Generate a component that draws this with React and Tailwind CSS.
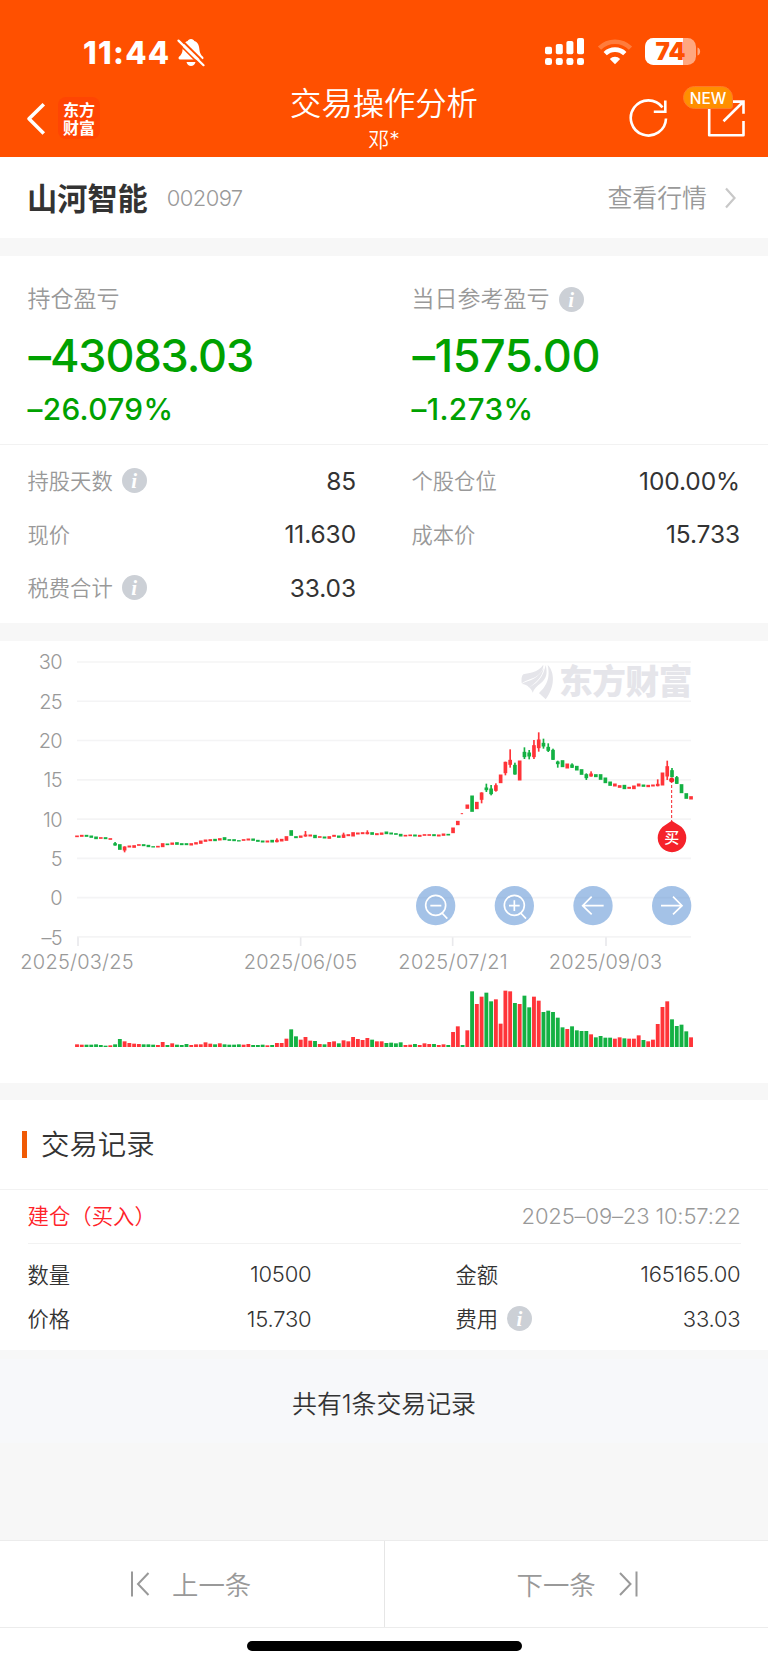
const RED = '#ff3439';
const GREEN = '#14b143';

// Daily candles: direction, body top, body bottom, optional wick top and wick bottom.
const CANDLES = `R586-592 R584-591 G584-591 G586-594 G589-598 R591-597 G591-598 R594-600 G609-617-606 G612-630 R619-632-619-637
R616-623 R615-624 R612-618 G612-619 G614-622 G618-623 R617-623 R609-622 G610-616 R607-615 G606-615 G609-616 G609-616
R609-617 R606-614 R601-612 R598-606 R597-604 G596-604 R594-602 G591-601 G597-603 G597-604 G600-605 R597-603 R595-602
G595-603 G599-606 G601-608 R601-608 G599-608 R599-607-595 R596-605 R588-603 G570-588 G588-595 R586-594 R583-590-573 R583-590
G584-595 R588-594 G589-596 R588-597 R584-591 G586-594 R583-594-578 R582-589 R576-590 R577-584 R576-583 R576-583-571
G576-585 R579-586 R577-585 G574-583 G577-584 G579-585 G581-590 R584-590 R583-589 G583-590 R584-591 R582-588
R582-588 G582-589 R583-590 R580-588 G581-587 R562-580 R542-556 R519-523 R493-507 G466-516 R485-508 R457-480-457-490
G442-451-431-456 G445-463-435-466 R435-453-430-455 R403-430 R365-400-365-406 R359-375-328-383 G374-404-368 R361-422
G335-352-322-357 G337-350-330-358 R315-352-300-357 R298-325-277-335 G308-320-296-326 G320-333-310-336 G329-360-326
G364-373-362-383 G360-382 R370-386 G373-384-370 G377-392 G387-405 G402-415-400-420 R400-410-394 G402-412 G402-420 G412-430
G424-438 R430-440 R435-444 G434-448 R440-447 R436-448 R430-440 G433-441 R434-442 R433-440 R431-439-418 R397-437
R378-410-362-420 G390-412-384 G411-432-408 G432-460 G459-477 R468-479`
  .split(/\s+/)
  .map((s) => [s[0], ...s.slice(1).split('-').map(Number)]);

// Daily volumes: direction and top of the bar.
const VOLUMES = `R1213 R1214 G1214 G1214 G1213 G1215 G1217 R1216 G1213 G1197 R1204 R1209 R1211 R1212 G1213 G1213 G1214 R1215
R1206 G1215 R1210 G1214 G1215 G1212 R1215 R1213 R1213 R1207 R1211 G1213 R1210 G1213 G1214 G1214 G1213 R1214 R1212
G1215 G1215 G1214 R1216 G1215 R1209 R1209 R1196 G1168 G1189 R1199 R1191 R1202 G1203 R1212 G1213 R1206 R1204
G1210 R1201 R1204 R1191 R1197 R1200 R1194 G1199 R1204 R1204 G1209 G1208 G1210 G1207 R1215 R1214 G1212 R1215
R1210 R1212 G1212 R1215 R1213 G1215 R1176 R1159 G1215 R1171 G1054 R1092 R1070 G1058 G1084 R1078 R1151 R1052
R1054 G1089 R1092 G1067 G1102 R1070 R1082 G1116 G1112 G1116 G1133 G1162 R1167 G1159 G1171 G1173 G1173 R1183
G1192 G1188 G1193 G1193 R1196 R1192 G1195 R1196 R1196 R1186 G1200 R1204 R1199 R1152 R1101 R1084 G1138 G1158
G1154 G1174 R1192`
  .split(/\s+/)
  .map((s) => [s[0], Number(s.slice(1))]);

const barX = (i) => 231 + 14.28 * i;
const tone = (d) => (d === 'R' ? RED : GREEN);

function Info() {
  return (
    <svg className="size-[25px] shrink-0" viewBox="0 0 25 25">
      <circle cx="12.5" cy="12.5" r="12.5" fill="#ccd0d6" />
      <text x="12.2" y="19.6" fontSize="21" fontStyle="italic" fontWeight="700" fontFamily="Liberation Serif, serif" fill="#fff" textAnchor="middle">i</text>
    </svg>
  );
}

function StatusBar() {
  return (
    <div className="flex h-[85px] items-start pt-[37px] text-white">
      <div className="ml-[83px] mt-px w-[87px] text-[31px] leading-[30px] font-extrabold tracking-[1.300px]">11:44</div>
      <svg className="ml-[7px] h-[30px] w-[28px]" viewBox="0 0 28 30">
        <path d="M14 2c-1.800 0-2.900 1.100-3.300 2.100C6.800 5.300 5.800 9 5.600 12.500c-.2 3.600-1.500 5.500-3.600 7.300-.9.800-.5 2.700.9 2.700h22.200c1.400 0 1.800-1.900.9-2.700-2.100-1.800-3.200-3.700-3.600-7.300-.3-3.500-1.300-7.200-5.100-8.400C16.900 3.100 15.800 2 14 2z" fill="#fff" />
        <path d="M9.500 25h9c-.6 2.600-2.400 4-4.500 4s-3.900-1.400-4.500-4z" fill="#fff" />
        <path d="M3.200 1.800 29 27" stroke="#ff5000" strokeWidth="2" />
        <path d="M.2 5.400 25 30" stroke="#ff5000" strokeWidth="1.600" />
        <path d="M1.500 3.600 26.500 28.200" stroke="#fff" strokeWidth="2.200" strokeLinecap="round" />
      </svg>
      <svg className="ml-[340px] h-[30px] w-[40px]" viewBox="0 0 40 30" fill="#fff">
        <rect x="0" y="9.700" width="7" height="7.600" rx="1.800" />
        <rect x="10.800" y="7" width="7" height="10.300" rx="1.800" />
        <rect x="21.400" y="4" width="7" height="13.300" rx="1.800" />
        <rect x="32" y="1" width="7" height="16.300" rx="1.800" />
        <rect x="0" y="21" width="7" height="7" rx="2.300" />
        <rect x="10.800" y="21" width="7" height="7" rx="2.300" />
        <rect x="21.400" y="21" width="7" height="7" rx="2.300" />
        <rect x="32" y="21" width="7" height="7" rx="2.300" />
      </svg>
      <svg className="ml-[12px] h-[30px] w-[36px]" viewBox="0 0 36 30" fill="none">
        <path d="M2.500 11.200a22 22 0 0 1 31 0" stroke="#ff7c3c" strokeWidth="4.600" />
        <path d="M8.200 16.600a14 14 0 0 1 19.600 0" stroke="#fff" strokeWidth="4.600" />
        <path d="M18 27.200l-5.200-5.300a7.400 7.400 0 0 1 10.400 0z" fill="#fff" />
      </svg>
      <svg className="ml-[12px] h-[30px] w-[57px]" viewBox="0 0 57 30">
        <defs>
          <clipPath id="cell"><rect x="0" y="1" width="51" height="27" rx="8.500" /></clipPath>
        </defs>
        <g clipPath="url(#cell)">
          <rect width="51" height="30" fill="#ffa77f" />
          <rect width="38" height="30" fill="#fff" />
        </g>
        <path d="M52.500 10.500c3.500 1 3.500 7 0 8z" fill="#ffa77f" />
        <text x="25.500" y="23" fontSize="24" fontWeight="900" textAnchor="middle" fill="#ff5000" textLength="30" lengthAdjust="spacingAndGlyphs" fontFamily="Inter">74</text>
      </svg>
    </div>
  );
}

function NavBar() {
  return (
    <div className="flex h-[72px] items-start text-white">
      <div className="flex w-[240px] pt-[12px] pl-[26px]">
        <svg className="mt-[5px] h-[34px] w-[20px]" viewBox="0 0 20 34" fill="none">
          <path d="M16.500 3.500 3 16.700l13.500 13.500" stroke="#fff" strokeWidth="3.600" strokeLinecap="square" strokeLinejoin="round" />
        </svg>
        <div className="ml-[12px] flex h-[42px] w-[42px] flex-col items-center justify-center rounded-[8px] bg-[#ff4503] pt-[2px] text-[16px] leading-[18px] font-bold">
          <span>东方</span>
          <span>财富</span>
        </div>
      </div>
      <div className="flex w-[288px] flex-col items-center">
        <div className="text-[31.300px] leading-[38px] font-[350]">交易操作分析</div>
        <div className="mt-[5px] text-[21px] leading-[24px] font-[350]">邓*</div>
      </div>
      <div className="relative flex w-[240px] pt-[13px]">
        <svg className="ml-[101px] h-[40px] w-[40px]" viewBox="0 0 40 40" fill="none" stroke="#fff" strokeWidth="2.600">
          <path d="M37 20.500A17.600 17.600 0 1 1 33.500 9.400" />
          <path d="M36.300 2.500v11.200H24.800" />
        </svg>
        <svg className="ml-[38px] h-[40px] w-[40px]" viewBox="0 0 40 40" fill="none" stroke="#fff" strokeWidth="2.600">
          <path d="M2.200 10v27.300h34.300V23" strokeLinejoin="round" />
          <path d="M25 3.600h11.500v12.200M36 4 16.500 23.200" />
        </svg>
        <span className="absolute top-px left-[155px] flex h-[23px] w-[50px] items-center justify-center rounded-[11.500px] rounded-br-[3px] border border-[#ff7a28] bg-[#ff8f00] pt-[2px] text-[15.500px] leading-none font-medium">NEW</span>
      </div>
    </div>
  );
}

function StockRow() {
  return (
    <div className="flex h-[81px] items-center bg-white px-[27px]">
      <span className="pt-[3px] text-[30.200px] leading-none font-bold text-[#333]">山河智能</span>
      <span className="ml-[19px] text-[22px] leading-none font-[350] tracking-[-0.600px] text-[#999]">002097</span>
      <span className="ml-auto pt-[2px] text-[24.900px] leading-none font-[350] text-[#999]">查看行情</span>
      <svg className="ml-[17px] h-[22px] w-[17px]" viewBox="0 0 17 22" fill="none">
        <path d="M2 1.500 10.500 11 2 20.500" stroke="#c8c8c8" strokeWidth="2.200" />
      </svg>
    </div>
  );
}

function Headline({ label, info, amount, percent, tracking }) {
  return (
    <div className="w-[384px] shrink-0 text-[#00a100]">
      <div className="flex h-[26px] items-center gap-[9px] text-[23px] leading-none font-[350] text-[#999]">
        <span className="pt-px">{label}</span>
        {info && <Info />}
      </div>
      <div className={`mt-[22px] pl-px text-[45px] leading-[44px] font-medium ${tracking}`}>{amount}</div>
      <div className="mt-[16px] text-[29.800px] leading-[30px] font-medium tracking-[0.350px]">{percent}</div>
    </div>
  );
}

function Fact({ label, info, value }) {
  return (
    <div className="flex h-[53.500px] w-[328.500px] items-center">
      <span className="pt-[2px] text-[21.300px] leading-none font-[350] text-[#999]">{label}</span>
      {info && <span className="ml-[9px]"><Info /></span>}
      <span className="ml-auto text-[24.500px] leading-none tracking-[-0.100px] text-[#333]">{value}</span>
    </div>
  );
}

function Position() {
  return (
    <section className="h-[367px] bg-white">
      <div className="flex h-[189px] overflow-hidden border-b border-[#f2f2f2] pt-[30px] pl-[27.500px]">
        <Headline label="持仓盈亏" amount="–43083.03" percent="–26.079%" tracking="tracking-[-1.100px]" />
        <Headline label="当日参考盈亏" info amount="–1575.00" percent="–1.273%" tracking="tracking-[-0.500px]" />
      </div>
      <div className="grid grid-cols-[328px_328px] gap-x-[56px] pt-[9px] pl-[27.500px]">
        <Fact label="持股天数" info value="85" />
        <Fact label="个股仓位" value="100.00%" />
        <Fact label="现价" value="11.630" />
        <Fact label="成本价" value="15.733" />
        <Fact label="税费合计" info value="33.03" />
      </div>
    </section>
  );
}

function Chart() {
  return (
    <svg className="block h-[442px] w-[768px] bg-white" viewBox="0 3 2304 1326" fontFamily="Inter, sans-serif">
      {[30, 25, 20, 15, 10, 5, 0, -5].map((v, i) => (
        <g key={v}>
          <line x1="231" x2="2073" y1={66 + i * 117.800} y2={66 + i * 117.800} stroke="#f4f4f5" strokeWidth="5" />
          <text x="186" y={88 + i * 118} fontSize="60" fontWeight="350" fill="#999" textAnchor="end" letterSpacing="-2">{v < 0 ? '–5' : v}</text>
        </g>
      ))}
      {[[234, '2025/03/25', 231], [902, '2025/06/05', 901], [1358, '2025/07/21', 1359], [1818, '2025/09/03', 1816]].map(([x, d, tx]) => (
        <g key={d}>
          <line x1={x} x2={x} y1="892" y2="918" stroke="#e9e9ec" strokeWidth="5" />
          <text x={tx} y="987" fontSize="60" fontWeight="350" fill="#999" textAnchor="middle" textLength={d.endsWith('21') ? 328 : 340}>{d}</text>
        </g>
      ))}
      <g fill="#e5e5ea">
        <path d="M1565 130C1564 118 1564 108 1570 103C1590 98 1612 98 1630 74C1630 92 1618 106 1600 114C1585 120 1575 122 1565 130z" />
        <path d="M1598 158C1596 150 1592 146 1588 143C1600 133 1627 125 1637 75C1643 100 1640 115 1622 130C1610 140 1602 146 1598 158z" />
        <path d="M1565 132C1580 122 1612 122 1631 84C1628 112 1606 128 1588 143C1582 136 1574 132 1565 132z" />
        <path d="M1637 178C1628 170 1622 164 1617 160C1630 145 1654 125 1643 75C1664 95 1666 140 1637 178z" />
        <text x="1677" y="163" fontSize="101" fontWeight="900" textLength="400" fontFamily="Noto Sans CJK SC, sans-serif">东方财富</text>
      </g>
      {CANDLES.map(([d, top, bottom, high = top, low = bottom], i) => (
        <g key={i} fill={tone(d)}>
          <rect x={barX(i) - 5.500} y={top + 0.500} width={i === 81 ? 7 : 11} height={bottom - top - 1} />
          {(high < top || low > bottom) && <rect x={barX(i) - 2.500} y={high} width="5" height={low - high} />}
        </g>
      ))}
      {VOLUMES.map(([d, top], i) => (
        <rect key={i} x={barX(i) - 5.800} y={top} width="11.600" height={1221 - top} fill={tone(d)} />
      ))}
      <line x1="2015" x2="2015" y1="420" y2="546" stroke="#f5222a" strokeWidth="3" strokeDasharray="9 6" />
      <circle cx="2015" cy="420" r="7.500" fill="#f5222a" />
      <path d="M2015 542 L2037 556 A43 43 0 1 1 1995 556 Z" fill="#f5222a" />
      <text x="2015" y="610" fontSize="45" fontWeight="500" fill="#fff" textAnchor="middle" fontFamily="Noto Sans CJK SC, sans-serif">买</text>
      {[1307, 1543, 1779, 2015].map((x) => (
        <circle key={x} cx={x} cy="797" r="59" fill="#4a86cf" fillOpacity="0.500" />
      ))}
      <g fill="none" stroke="#fff" strokeWidth="5">
        <circle cx="1307" cy="796" r="30" />
        <path d="M1291 797h33M1326 819l16 17" />
        <circle cx="1543" cy="796" r="30" />
        <path d="M1527 797h32M1543 781v32M1562 819l16 17" />
        <path d="M1811 797h-62M1775 770l-27 27 27 26" />
        <path d="M1983 797h62M2019 770l27 27-27 26" />
      </g>
    </svg>
  );
}

function RecordRow({ cells }) {
  const [a, b, c, d, info] = cells;
  return (
    <div className="flex h-[44.600px] items-center text-[22px] leading-none font-[350] tracking-[-0.200px] text-[#333]">
      <span className="w-[100px] pt-[2px] text-[21.300px] tracking-normal">{a}</span>
      <span className="w-[184px] text-right">{b}</span>
      <span className="mr-[9px] ml-[144px] pt-[2px] text-[21.300px] tracking-normal">{c}</span>
      {info && <Info />}
      <span className="ml-auto">{d}</span>
    </div>
  );
}

function Records() {
  return (
    <section className="h-[250px] bg-white">
      <div className="flex h-[89.500px] items-center border-b border-[#f2f2f2] pl-[21.500px] text-[28.400px] leading-none font-[350] text-[#333]">
        <i className="mr-[14px] block h-[27px] w-[5.500px] bg-[#f05a05]" />
        <span className="pt-[2px]">交易记录</span>
      </div>
      <div className="mx-[27.500px]">
        <div className="flex h-[54px] items-center justify-between border-b border-[#f2f2f2] font-[350]">
          <span className="pt-[2px] text-[21.400px] leading-none text-[#ff2229]">建仓（买入）</span>
          <span className="text-[22px] leading-none tracking-[-0.150px] text-[#999]">2025–09–23 10:57:22</span>
        </div>
        <div className="pt-[8.500px]">
          <RecordRow cells={['数量', '10500', '金额', '165165.00']} />
          <RecordRow cells={['价格', '15.730', '费用', '33.03', true]} />
        </div>
      </div>
    </section>
  );
}

function Pager() {
  return (
    <nav className="flex h-[88px] border-y border-[#ececec] bg-white text-[26.400px] leading-none font-[350] text-[#999]">
      <div className="flex w-[384.500px] items-center border-r border-[#e6e6e6] pl-[129px]">
        <svg className="mr-[22px] h-[28px] w-[21px]" viewBox="0 0 21 28" fill="none" stroke="#999" strokeWidth="2">
          <path d="M3 1.500v25M19.500 3 9 14l10.500 11" />
        </svg>
        <span className="pt-[2px]">上一条</span>
      </div>
      <div className="flex flex-1 items-center pl-[132px]">
        <span className="pt-[2px]">下一条</span>
        <svg className="ml-[22px] h-[28px] w-[21px]" viewBox="0 0 21 28" fill="none" stroke="#999" strokeWidth="2">
          <path d="M18.500 1.500v25M2 3l10.500 11L2 25" />
        </svg>
      </div>
    </nav>
  );
}

export default function App() {
  return (
    <main className="h-[1665px] w-[768px] overflow-hidden bg-[#f7f7f7] font-['Inter','Noto_Sans_CJK_SC',sans-serif]">
      <header className="h-[157px] bg-[#ff5000]">
        <StatusBar />
        <NavBar />
      </header>
      <StockRow />
      <div className="h-[18px]" />
      <Position />
      <div className="h-[18px]" />
      <Chart />
      <div className="h-[17px]" />
      <Records />
      <div className="h-[190px] pt-[9px]">
        <div className="flex h-[84px] justify-center bg-[#f7f8fa] pt-[33px] text-[24.900px] leading-[24px] font-[350] text-[#333]">共有1条交易记录</div>
      </div>
      <Pager />
      <div className="flex h-[37px] justify-center bg-white pt-[13px]">
        <i className="block h-[9.500px] w-[275px] rounded-full bg-black" />
      </div>
    </main>
  );
}
